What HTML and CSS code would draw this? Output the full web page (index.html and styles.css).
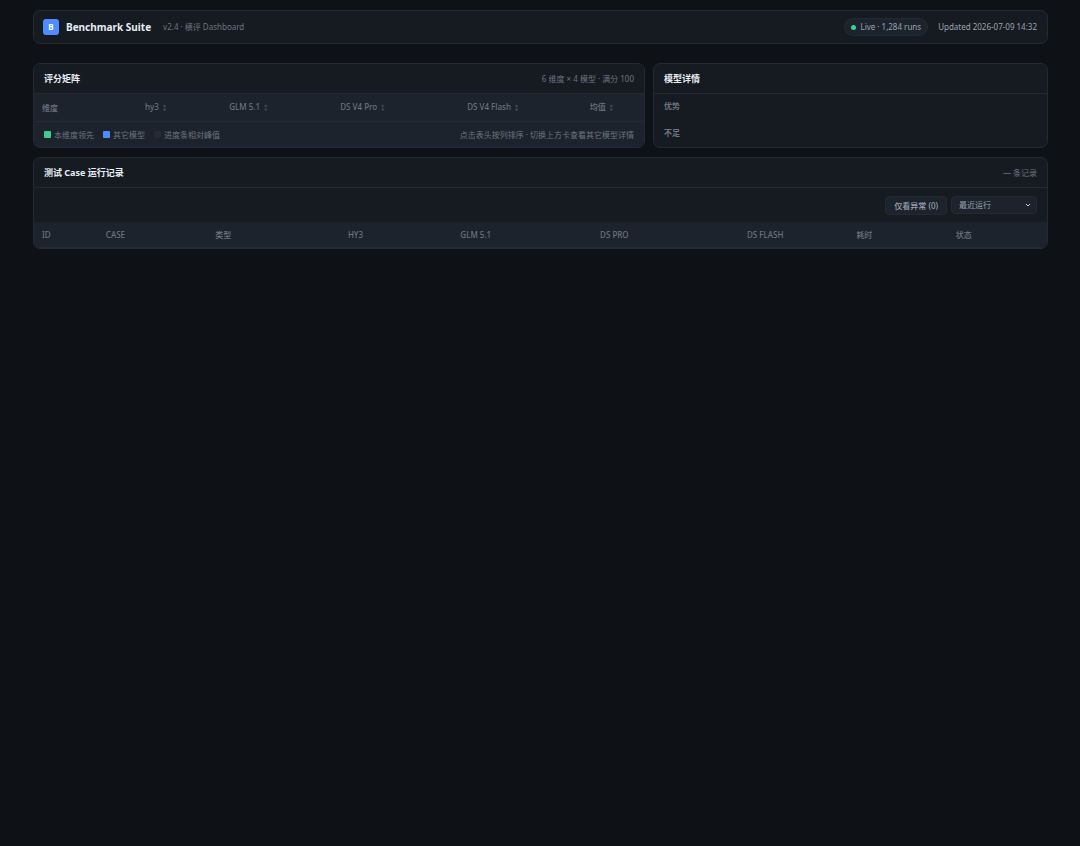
FILE: index.html
```
<!DOCTYPE html>
<html lang="zh-CN">
<head>
    <meta charset="UTF-8">
    <meta name="viewport" content="width=device-width, initial-scale=1.0">
    <title>Benchmark Suite</title>
    <link rel="stylesheet" href="styles.css">
</head>
<body>
    <div class="page">
        <header class="topbar">
            <div class="logo">B</div>
            <h1>Benchmark Suite</h1>
            <span class="version">v2.4 · 横评 Dashboard</span>
            <div class="topbar-right">
                <span class="live"><i class="dot"></i>Live · 1,284 runs</span>
                <span class="updated">Updated 2026-07-09 14:32</span>
            </div>
        </header>

        <main>
            <div class="grid">
                <!-- Score matrix -->
                <section class="card">
                    <div class="card-head">
                        <h2>评分矩阵</h2>
                        <span class="sub">6 维度 × 4 模型 · 满分 100</span>
                    </div>
                    <table class="matrix">
                        <colgroup>
                            <col class="m-dim"><col class="m-hy"><col class="m-glm">
                            <col class="m-pro"><col class="m-flash"><col class="m-avg">
                        </colgroup>
                        <thead>
                            <tr>
                                <th>维度</th>
                                <th>hy3 <span class="arrow">↕</span></th>
                                <th>GLM 5.1 <span class="arrow">↕</span></th>
                                <th>DS V4 Pro <span class="arrow">↕</span></th>
                                <th>DS V4 Flash <span class="arrow">↕</span></th>
                                <th>均值 <span class="arrow">↕</span></th>
                            </tr>
                        </thead>
                        <tbody></tbody>
                    </table>
                    <div class="legend">
                        <span class="key"><i class="swatch green"></i>本维度领先</span>
                        <span class="key"><i class="swatch blue"></i>其它模型</span>
                        <span class="key"><i class="swatch gray"></i>进度条相对峰值</span>
                        <span class="hint">点击表头按列排序 · 切换上方卡查看其它模型详情</span>
                    </div>
                </section>

                <!-- Model detail -->
                <section class="card">
                    <div class="card-head">
                        <h2>模型详情</h2>
                    </div>
                    <div class="detail">
                        <h3>优势</h3>
                        <h3>不足</h3>
                    </div>
                </section>
            </div>

            <!-- Case runs -->
            <section class="card">
                <div class="card-head">
                    <h2>测试 Case 运行记录</h2>
                    <span class="sub">— 条记录</span>
                </div>
                <div class="toolbar">
                    <button type="button" class="btn">仅看异常 (0)</button>
                    <div class="select-wrap">
                        <select class="select" aria-label="排序">
                            <option>最近运行</option>
                        </select>
                        <svg class="chevron" viewBox="0 0 8 8" aria-hidden="true"><path d="M2 3l2 2 2-2" /></svg>
                    </div>
                </div>
                <table class="cases">
                    <colgroup>
                        <col class="c-id"><col class="c-case"><col class="c-type">
                        <col class="c-hy"><col class="c-glm"><col class="c-pro">
                        <col class="c-flash"><col class="c-time"><col class="c-state">
                    </colgroup>
                    <thead>
                        <tr>
                            <th>ID</th>
                            <th>Case</th>
                            <th>类型</th>
                            <th>hy3</th>
                            <th>GLM 5.1</th>
                            <th>DS Pro</th>
                            <th>DS Flash</th>
                            <th>耗时</th>
                            <th>状态</th>
                        </tr>
                    </thead>
                    <tbody></tbody>
                </table>
            </section>
        </main>
    </div>
</body>
</html>
```
FILE: styles.css
```
:root {
    --bg: #0e1115;
    --card: #161b22;
    --raised: #1c232c;
    --border: #232a33;
    --text: #e6edf3;
    --soft: #9aa4b0;
    --muted: #6b7480;
    --green: #3ecf8e;
    --blue: #4f8cff;
}

* {
    box-sizing: border-box;
}

body {
    margin: 0;
    background: var(--bg);
    color: var(--text);
    font-family: "Noto Sans", "Noto Sans CJK SC", sans-serif;
    font-size: 8px;
    line-height: 12px;
}

.page {
    padding: 10px 32px 32px 33px;
}

h1,
h2,
h3 {
    margin: 0;
}

.topbar {
    display: flex;
    align-items: center;
    height: 34px;
    padding: 0 10px 0 9px;
    margin-bottom: 19px;
    background: var(--card);
    border: 1px solid var(--border);
    border-radius: 7px;
}

.logo {
    width: 16px;
    height: 16px;
    margin-right: 7px;
    border-radius: 3px;
    background: var(--blue);
    color: #fff;
    font-weight: 700;
    line-height: 16px;
    text-align: center;
}

h1 {
    font-size: 10px;
    font-weight: 700;
}

.version {
    margin-left: 12px;
    color: var(--muted);
}

.topbar-right {
    display: flex;
    align-items: center;
    gap: 10px;
    margin-left: auto;
    color: var(--soft);
}

.live {
    display: flex;
    align-items: center;
    gap: 4px;
    height: 18px;
    padding: 0 6px;
    background: var(--raised);
    border: 1px solid var(--border);
    border-radius: 9px;
}

.dot {
    width: 5px;
    height: 5px;
    border-radius: 50%;
    background: var(--green);
}

.grid {
    display: grid;
    grid-template-columns: 612fr 395fr;
    gap: 8px;
    margin-bottom: 9px;
}

.card {
    overflow: hidden;
    background: var(--card);
    border: 1px solid var(--border);
    border-radius: 7px;
}

.card-head {
    display: flex;
    align-items: center;
    justify-content: space-between;
    height: 30px;
    padding: 0 10px;
    border-bottom: 1px solid var(--border);
}

h2 {
    font-size: 9px;
    font-weight: 700;
}

.sub {
    color: var(--muted);
}

table {
    width: 100%;
    border-spacing: 0;
    table-layout: fixed;
}

th {
    padding: 0 8px;
    background: var(--raised);
    border-bottom: 1px solid var(--border);
    color: var(--muted);
    font-weight: 500;
    text-align: left;
    white-space: nowrap;
}

.matrix th {
    height: 28px;
}

.arrow {
    font-size: 7px;
    opacity: 0.6;
}

.m-dim { width: 16.9%; }
.m-hy { width: 13.8%; }
.m-glm { width: 18.2%; }
.m-pro { width: 20.8%; }
.m-flash { width: 20.1%; }
.m-avg { width: 10.2%; }

.legend {
    display: flex;
    align-items: center;
    gap: 9px;
    height: 25px;
    padding: 0 10px;
    background: var(--raised);
    color: var(--muted);
}

.key {
    display: flex;
    align-items: center;
    gap: 3px;
}

.swatch {
    width: 7px;
    height: 7px;
    border-radius: 1px;
}

.green { background: var(--green); }
.blue { background: var(--blue); }
.gray { background: #252b35; }

.hint {
    margin-left: auto;
}

.detail {
    display: grid;
    gap: 15px;
    padding: 6px 10px;
}

h3 {
    color: var(--muted);
    font-size: 8px;
    font-weight: 600;
}

.toolbar {
    display: flex;
    align-items: flex-start;
    justify-content: flex-end;
    gap: 4px;
    padding: 8px 10px 7px;
}

.btn,
.select {
    background: var(--raised);
    border: 1px solid var(--border);
    border-radius: 4px;
    color: var(--soft);
    font: inherit;
}

.btn {
    height: 19px;
    padding: 0 8px;
    font-weight: 500;
}

.select-wrap {
    position: relative;
}

.select {
    display: block;
    width: 86px;
    height: 18px;
    padding: 0 16px 0 7px;
    appearance: none;
}

.chevron {
    position: absolute;
    top: 5px;
    right: 5px;
    width: 8px;
    height: 8px;
    fill: none;
    stroke: #c3cad3;
    pointer-events: none;
}

.cases th {
    height: 26px;
    text-transform: uppercase;
}

.c-id { width: 6.3%; }
.c-case { width: 10.8%; }
.c-type { width: 13.1%; }
.c-hy { width: 11.1%; }
.c-glm { width: 13.8%; }
.c-pro { width: 14.5%; }
.c-flash { width: 10.8%; }
.c-time { width: 9.8%; }
.c-state { width: 9.8%; }
```
